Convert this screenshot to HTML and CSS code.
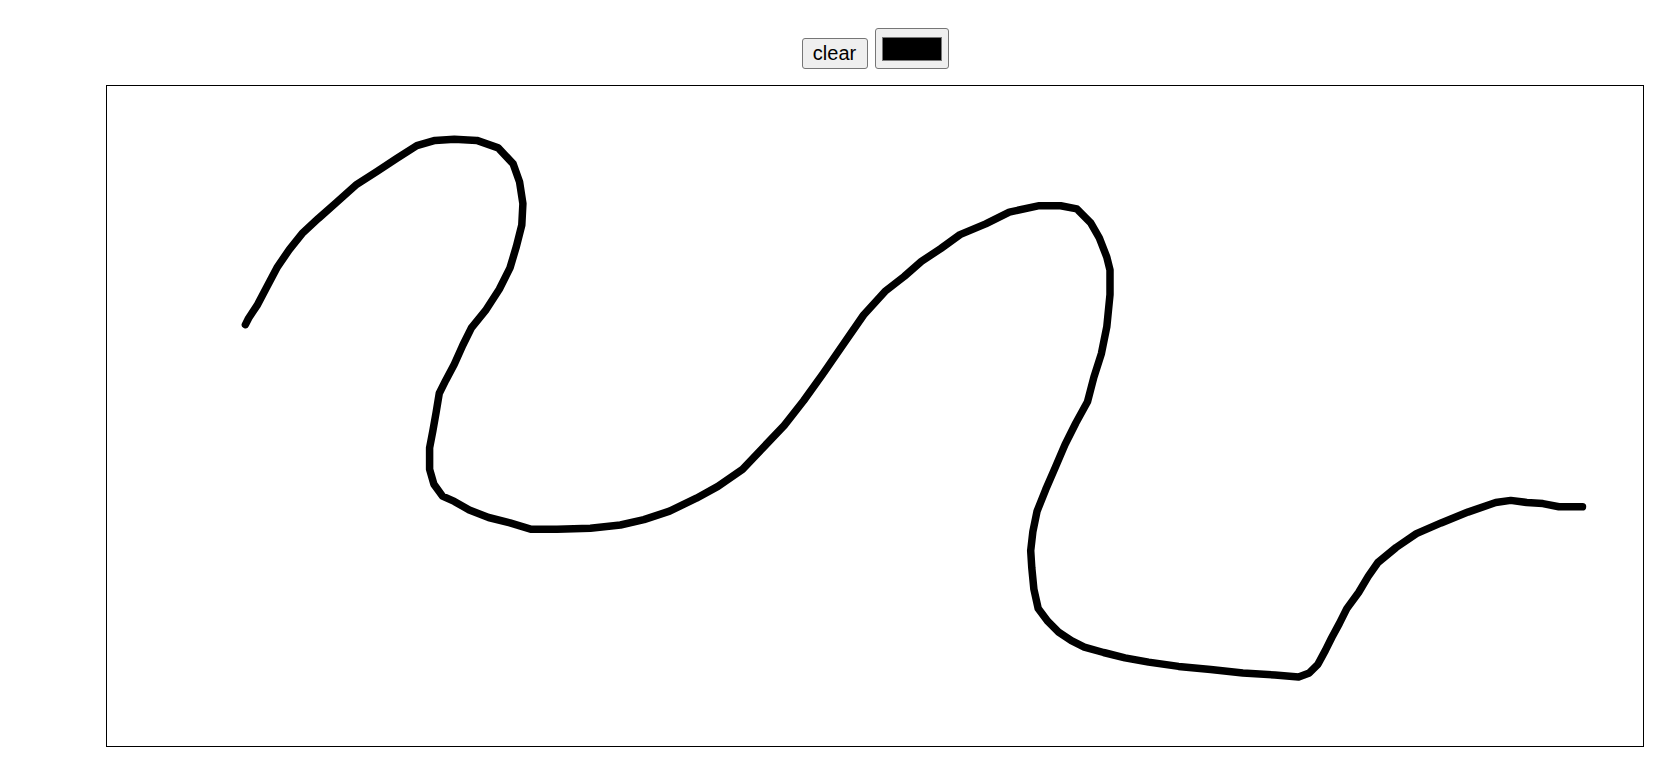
FILE: index.html
```html
<!DOCTYPE html>
<html lang="en">
<head>
<meta charset="utf-8">
<title>Drawing</title>
<link rel="stylesheet" href="styles.css">
</head>
<body>
<div class="app">
  <div class="toolbar">
    <button class="btn" type="button">clear</button>
    <input class="color" type="color" value="#000000">
  </div>
  <div class="board">
    <svg class="ink" width="1536" height="660" viewBox="107 86 1536 660" xmlns="http://www.w3.org/2000/svg">
      <polyline fill="none" stroke="#000" stroke-width="7.5" stroke-linecap="round" stroke-linejoin="round"
        points="245.4,324.6 248.6,318.2 257.1,305.4 266.8,287.1 277.5,266.8 289.3,249.6 302.1,233.6 318.2,218.6 336.4,202.5 356.8,184.3 377.1,171.4 396.4,158.6 416.8,145.7 435,140.4 454.3,139.3 476.8,140.4 498.2,147.9 513.2,163.9 519.6,182.1 522.9,203.6 521.8,225 516.4,246.4 510,267.9 499.3,289.3 485.4,310.7 471.4,327.9 462.9,345 454.3,364.3 445.7,380.4 439.3,393.2 436.1,412.5 432.9,430.7 429.6,447.9 429.6,469.3 433.9,484.3 442.5,496.1 454.3,501.4 469.3,510 488.6,517.5 510,522.9 531.4,529.3 557.1,529.3 590.4,528.2 620.4,525 643.9,519.6 669.6,511.1 696.4,498.2 717.9,486.4 742.5,469.3 763.9,446.8 784.3,425.4 803.6,400.7 822.9,373.9 844.3,342.9 863.6,315 885,291.4 904.3,276.4 921.4,261.4 940.7,248.6 960,234.6 985.7,223.9 1009.3,212.1 1039.3,205.7 1060.7,205.7 1076.8,208.9 1090.7,222.9 1099.3,237.9 1106.8,257.1 1110,270 1110,294.6 1106.8,326.8 1101.4,353.6 1093.9,377.1 1087.5,401.8 1075.7,423.2 1065,444.6 1055.4,467.1 1045.7,489.6 1037.1,511.1 1032.9,531.4 1030.7,550.7 1031.8,567.9 1033.9,589.3 1038.2,608.6 1047.9,621.4 1058.6,632.1 1071.4,640.7 1084.3,647.1 1103.6,652.5 1125,657.9 1148.6,662.1 1178.6,666.4 1210.7,669.6 1242.9,672.9 1275,675 1298.6,677.1 1309.3,672.9 1317.9,664.3 1325.4,650.4 1331.8,637.5 1339.3,623.6 1346.8,608.6 1358.6,592.5 1368.2,576.4 1377.9,562.5 1396.1,547.5 1416.4,533.6 1441.1,522.9 1467.9,512.1 1495.7,502.5 1510.7,500.4 1526.8,502.5 1542.9,503.6 1558.9,506.8 1582.5,506.8"/>
    </svg>
  </div>
</div>
</body>
</html>
```

FILE: styles.css
```css
html, body {
  margin: 0;
  padding: 0;
  background: #ffffff;
}

body {
  font-family: "Liberation Sans", Arial, sans-serif;
  overflow: hidden;
}

.app {
  width: 1538px;
  margin-left: 106px;
  padding-top: 28px;
  display: flex;
  flex-direction: column;
  gap: 16px;
}

.toolbar {
  display: flex;
  justify-content: center;
  align-items: flex-end;
  gap: 7px;
}

.btn {
  box-sizing: border-box;
  width: 66px;
  height: 31px;
  margin: 0;
  padding: 0;
  font-family: "Liberation Sans", Arial, sans-serif;
  font-size: 20px;
  line-height: 23px;
  color: #000000;
  background: #efefef;
  border: 1px solid #767676;
  border-radius: 3px;
}

.color {
  box-sizing: border-box;
  width: 74px;
  height: 41px;
  margin: 0;
  padding: 1.5px 3px;
  background: #efefef;
  border: 1px solid #767676;
  border-radius: 3px;
  -webkit-appearance: none;
  appearance: none;
}

.color::-webkit-color-swatch-wrapper {
  padding: 6px 3px;
}

.color::-webkit-color-swatch {
  border: 1px solid #777777;
  border-radius: 0;
}

.board {
  box-sizing: border-box;
  width: 1538px;
  height: 662px;
  border: 1px solid #000000;
  background: #ffffff;
}

.ink {
  display: block;
}
```
